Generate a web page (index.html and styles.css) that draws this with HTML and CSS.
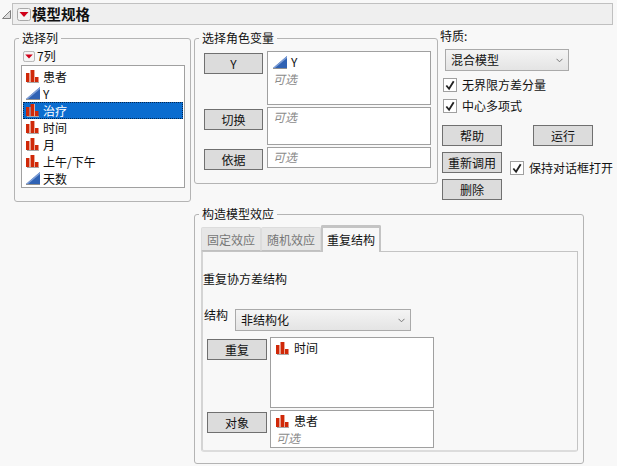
FILE: index.html
```html
<!DOCTYPE html>
<html lang="zh">
<head>
<meta charset="utf-8">
<title>模型规格</title>
<link rel="stylesheet" href="styles.css">
</head>
<body>
<svg class="defs" width="0" height="0">
  <symbol id="nom" viewBox="0 0 14 13">
    <path fill="#a8a8a8" d="M1 12h12v1H1z"/>
    <path fill="#d02808" d="M0 3h3.500v9H0zM4.500 0H8v12H4.500zM9 7h3.500v5H9z"/>
    <path fill="#e8a898" d="M3.500 3h1v9h-1zM8 0h1v12H8z"/>
  </symbol>
  <symbol id="cont" viewBox="0 0 14 13">
    <path fill="#2f62b4" d="M14 0v12H0z"/>
    <path fill="#7f9fd6" d="M14 0 0 12h2L14 2z"/>
    <path fill="#909090" d="M0 12h14v1H0z"/>
  </symbol>
  <symbol id="red" viewBox="0 0 14 13">
    <rect x=".5" y=".5" width="13" height="12" rx="2" fill="#f4f4f4" stroke="#a8a8a8"/>
    <path fill="#d0021b" d="M2.500 4h9L7 9z"/>
  </symbol>
</svg>

<header class="title-row">
  <svg class="disclosure" width="9" height="9" viewBox="0 0 9 9"><path d="M8.500.5v8h-8z" fill="#ddd" stroke="#808080"/></svg>
  <div class="title-bar">
    <svg class="red-btn"><use href="#red"/></svg>
    <h1>模型规格</h1>
  </div>
</header>

<main class="layout">
  <fieldset class="group col-group">
    <legend>选择列</legend>
    <div class="count"><svg class="red-btn small"><use href="#red"/></svg><span>7列</span></div>
    <ul class="list columns">
      <li><svg class="ico"><use href="#nom"/></svg>患者</li>
      <li><svg class="ico"><use href="#cont"/></svg>Y</li>
      <li class="selected"><svg class="ico"><use href="#nom"/></svg>治疗</li>
      <li><svg class="ico"><use href="#nom"/></svg>时间</li>
      <li><svg class="ico"><use href="#nom"/></svg>月</li>
      <li><svg class="ico"><use href="#nom"/></svg>上午/下午</li>
      <li><svg class="ico"><use href="#cont"/></svg>天数</li>
    </ul>
  </fieldset>

  <fieldset class="group role-group">
    <legend>选择角色变量</legend>
    <div class="role-grid">
      <button class="btn">Y</button>
      <div class="box h54"><div class="entry"><svg class="ico"><use href="#cont"/></svg>Y</div><div class="opt">可选</div></div>
      <button class="btn">切换</button>
      <div class="box h38"><div class="opt">可选</div></div>
      <button class="btn">依据</button>
      <div class="box h21"><div class="opt">可选</div></div>
    </div>
  </fieldset>

  <section class="side">
    <div class="side-label">特质:</div>
    <div class="select side-select"><span>混合模型</span><svg class="chev" width="7" height="5" viewBox="0 0 7 5"><path d="M.5.8 3.500 3.800 6.500.8" fill="none" stroke="#777"/></svg></div>
    <label class="check first"><span class="tick"><svg width="13" height="13" viewBox="0 0 13 13"><path d="M2.500 6.500 5.500 10 10.500 2" fill="none" stroke="#222" stroke-width="2"/></svg></span>无界限方差分量</label>
    <label class="check"><span class="tick"><svg width="13" height="13" viewBox="0 0 13 13"><path d="M2.500 6.500 5.500 10 10.500 2" fill="none" stroke="#222" stroke-width="2"/></svg></span>中心多项式</label>
    <div class="actions">
      <button class="btn">帮助</button>
      <button class="btn run">运行</button>
      <button class="btn">重新调用</button>
      <label class="check keep"><span class="tick"><svg width="13" height="13" viewBox="0 0 13 13"><path d="M2.500 6.500 5.500 10 10.500 2" fill="none" stroke="#222" stroke-width="2"/></svg></span>保持对话框打开</label>
      <button class="btn">删除</button>
    </div>
  </section>

  <fieldset class="group effects">
    <legend>构造模型效应</legend>
    <div class="tabs">
      <div class="tab">固定效应</div>
      <div class="tab">随机效应</div>
      <div class="tab active">重复结构</div>
    </div>
    <div class="panel">
      <p class="panel-title">重复协方差结构</p>
      <div class="struct">
        <span class="struct-label">结构</span>
        <div class="select struct-select"><span>非结构化</span><svg class="chev" width="7" height="5" viewBox="0 0 7 5"><path d="M.5.8 3.500 3.800 6.500.8" fill="none" stroke="#777"/></svg></div>
      </div>
      <div class="role-grid repeat-grid">
        <button class="btn">重复</button>
        <div class="box h71"><div class="entry"><svg class="ico"><use href="#nom"/></svg>时间</div></div>
        <button class="btn">对象</button>
        <div class="box h38"><div class="entry"><svg class="ico"><use href="#nom"/></svg>患者</div><div class="opt">可选</div></div>
      </div>
    </div>
  </fieldset>
</main>
</body>
</html>
```

FILE: styles.css
```css
* { box-sizing: border-box; }
html, body { margin: 0; padding: 0; }
body {
  width: 617px;
  height: 466px;
  overflow: hidden;
  background: #f8f8f8;
  color: #111;
  font: 12px/16px "Noto Sans CJK SC", "Liberation Sans", sans-serif;
}
.defs { position: absolute; }
.title-row { display: flex; align-items: center; padding: 3px 4px 0 2px; }
.disclosure { margin-right: 1px; margin-top: 1px; }
.title-bar {
  flex: 1;
  height: 22px;
  display: flex;
  align-items: center;
  gap: 1px;
  padding-left: 4px;
  background: #efefef;
  border: 1px solid #c0c0c0;
}
.red-btn { width: 14px; height: 13px; flex: none; }
.red-btn.small { height: 11px; width: 14px; }
h1 { margin: 0; font-size: 14.5px; font-weight: 700; line-height: 20px; }
.layout {
  display: grid;
  grid-template-columns: 177px 244px 178px;
  column-gap: 3px;
  padding: 5px 0 0 14px;
  align-items: start;
}
.group {
  margin: 0;
  min-width: 0;
  border: 1px solid #b4b4b4;
  border-radius: 3px;
  padding: 0;
}
.group legend { margin-left: 4px; padding: 0 3px; line-height: 16px; font-size: 12px; }
.col-group { height: 172px; padding: 0 5px 0 6px; }
.col-group legend { margin-left: -2px; }
.count { display: flex; align-items: center; height: 16px; margin: 2px 0 1px 1px; }
.count span { margin-left: 1px; }
.list { list-style: none; margin: 0; padding: 2px 1px; border: 1px solid #a0a0a0; background: #fff; }
.columns { height: 123px; width: 164px; }
.columns li { display: flex; align-items: center; gap: 3px; height: 17px; padding-left: 2px; border: 1px dotted transparent; }
.columns li.selected { background: #0a6ccf; color: #fff; border-color: #04264d; }
.ico { width: 14px; height: 13px; flex: none; }
.role-group { height: 154px; }
.role-grid {
  display: grid;
  grid-template-columns: 59px 164px;
  column-gap: 4px;
  row-gap: 2px;
  padding: 5px 0 0 9px;
  align-items: start;
}
.btn {
  margin: 2px 0 0;
  height: 21px;
  width: 60px;
  padding: 0;
  background: #dcdcdc;
  border: 1px solid #707070;
  color: #111;
  font: 12px/16px "Noto Sans CJK SC", "Liberation Sans", sans-serif;
}
.role-grid .btn { width: 59px; }
.box { background: #fff; border: 1px solid #a0a0a0; padding: 1px 5px; }
.h54 { height: 54px; }
.h38 { height: 38px; }
.h21 { height: 21px; }
.h71 { height: 71px; }
.entry { display: flex; align-items: center; gap: 4px; height: 18px; }
.opt { color: #8c8c8c; font-style: italic; line-height: 16px; }
.side { height: 172px; margin-top: -2px; }
.side-label { line-height: 16px; margin-left: -1px; }
.select {
  display: flex;
  align-items: center;
  justify-content: space-between;
  height: 22px;
  padding: 0 5px;
  border: 1px solid #aaa;
  background: linear-gradient(#f4f4f4, #e4e4e4);
}
.side-select { width: 124px; margin: 5px 0 0 4px; }
.check { display: flex; align-items: center; gap: 5px; height: 16px; margin: 4px 0 0 2px; }
.check.first { margin-top: 6px; }
.tick { width: 14px; height: 14px; flex: none; background: #fff; border: 1px solid #a0a0a0; display: flex; align-items: center; justify-content: center; }
.check + .check { margin-top: 5px; }
.actions {
  display: grid;
  grid-template-columns: 68px 91px;
  grid-auto-rows: 27px;
  margin: 11px 0 0 1px;
}
.actions .btn { margin: 0; }
.actions .run { margin-left: 23px; }
.keep { margin: 8px 0 0 0; width: 110px; white-space: nowrap; gap: 5px; }
.effects { grid-column: 2 / 4; width: 390px; height: 258px; margin-top: 4px; padding: 0 5px 0 6px; }
.effects legend { margin-left: -2px; }
.tabs { display: flex; align-items: flex-end; height: 27px; margin-top: 2px; }
.tab {
  width: 60px;
  height: 24px;
  line-height: 23px;
  text-align: center;
  color: #777;
  background: #e6e6e6;
  border: 1px solid #dcdcdc;
  border-bottom: 1px solid #c0c0c0;
  border-radius: 2px 2px 0 0;
}
.tab.active { height: 27px; line-height: 24px; color: #111; background: #f8f8f8; border: 2px solid #c4c4c4; border-bottom: 0; border-top-width: 3px; margin-bottom: -1px; position: relative; }
.panel {
  height: 201px;
  border: 1px solid #c4c4c4;
  border-left-width: 2px;
  border-bottom-width: 2px;
  border-bottom-color: #dcdcdc;
  border-left-color: #d4d4d4;
  border-radius: 0 0 3px 3px;
}
.panel-title { margin: 19px 0 0 0; line-height: 16px; }
.struct { display: flex; align-items: center; gap: 7px; margin: 22px 0 0 1px; }
.struct-label { margin-top: -10px; }
.struct-select { width: 176px; }
.repeat-grid { padding: 6px 0 0 4px; grid-template-columns: 60px 164px; column-gap: 3px; }
.repeat-grid .btn { width: 60px; }
```
